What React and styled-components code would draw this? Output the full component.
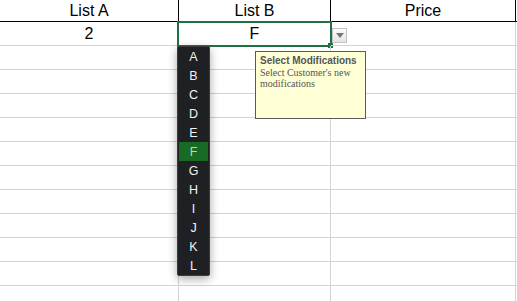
import styled, { createGlobalStyle } from 'styled-components';

const GlobalStyle = createGlobalStyle`
  html, body {
    margin: 0;
    padding: 0;
    background: #ffffff;
    overflow: hidden;
  }
`;

const Sheet = styled.div`
  display: grid;
  grid-template-columns: 179px 152px 185px 1fr;
  font-family: "Liberation Sans", Arial, sans-serif;
  color: #000;
`;

const HeaderCell = styled.div`
  box-sizing: border-box;
  height: 22px;
  border-bottom: 1px solid #000;
  border-right: ${({ last }) => (last ? 'none' : '1px solid #000')};
  display: flex;
  align-items: center;
  justify-content: center;
  font-size: 16px;
`;

const Cell = styled.div`
  box-sizing: border-box;
  position: relative;
  height: 24px;
  border-bottom: 1px solid #d4d4d4;
  border-right: ${({ last }) => (last ? 'none' : '1px solid #d4d4d4')};
  display: flex;
  align-items: center;
  justify-content: center;
  font-size: 16px;
`;

const Selection = styled.div`
  position: absolute;
  left: -2px;
  top: -1px;
  width: 155px;
  height: 26px;
  box-sizing: border-box;
  border: 2px solid #1f7244;
  pointer-events: none;
`;

const FillHandle = styled.div`
  position: absolute;
  right: -3px;
  bottom: -3px;
  width: 5px;
  height: 5px;
  background: #1f7244;
`;

const DropButton = styled.div`
  position: absolute;
  left: 153px;
  top: 6px;
  width: 15px;
  height: 15px;
  box-sizing: border-box;
  border: 1px solid #c4c4c4;
  background: linear-gradient(#fbfbfb, #e4e4e4);
  display: flex;
  align-items: center;
  justify-content: center;

  &::after {
    content: '';
    border-left: 4px solid transparent;
    border-right: 4px solid transparent;
    border-top: 5px solid #767676;
  }
`;

const ListBox = styled.ul`
  position: absolute;
  left: -2px;
  top: 24px;
  width: 33px;
  box-sizing: border-box;
  margin: 0;
  padding: 0 1px;
  list-style: none;
  background: #1f2023;
  border: 1px solid #3c3c3e;
  border-radius: 2px;
  box-shadow: 0 3px 10px rgba(0, 0, 0, 0.35);
  z-index: 2;
`;

const ListItem = styled.li`
  height: 19px;
  display: flex;
  align-items: center;
  justify-content: center;
  font-family: "Liberation Sans", Arial, sans-serif;
  font-size: 12.5px;
  color: ${({ active }) => (active ? '#b9d6bc' : '#f2f2f2')};
  background: ${({ active }) => (active ? '#176b25' : 'transparent')};
`;

const Tooltip = styled.div`
  position: absolute;
  left: 76px;
  top: 29px;
  width: 111px;
  height: 68px;
  box-sizing: border-box;
  padding: 3px 4px;
  background: #ffffd6;
  border: 1px solid #5a5a5a;
  color: #555;
  z-index: 1;
  text-align: left;
`;

const TipTitle = styled.div`
  font-family: "Liberation Sans", Arial, sans-serif;
  font-weight: bold;
  font-size: 10px;
  line-height: 12px;
`;

const TipBody = styled.div`
  font-family: "Liberation Serif", "Times New Roman", serif;
  font-size: 10px;
  line-height: 11px;
`;

const letters = ['A', 'B', 'C', 'D', 'E', 'F', 'G', 'H', 'I', 'J', 'K', 'L'];

export default function App() {
  const emptyRows = Array.from({ length: 11 });

  return (
    <>
      <GlobalStyle />
      <Sheet>
        <HeaderCell>List A</HeaderCell>
        <HeaderCell>List B</HeaderCell>
        <HeaderCell>Price</HeaderCell>
        <HeaderCell last />

        <Cell>2</Cell>
        <Cell>
          F
          <Selection>
            <FillHandle />
          </Selection>
          <DropButton />
          <ListBox>
            {letters.map((l) => (
              <ListItem key={l} active={l === 'F'}>
                {l}
              </ListItem>
            ))}
          </ListBox>
          <Tooltip>
            <TipTitle>Select Modifications</TipTitle>
            <TipBody>Select Customer's new modifications</TipBody>
          </Tooltip>
        </Cell>
        <Cell />
        <Cell last />

        {emptyRows.map((_, i) => (
          <Row key={i} />
        ))}
      </Sheet>
    </>
  );
}

function Row() {
  return (
    <>
      <Cell />
      <Cell />
      <Cell />
      <Cell last />
    </>
  );
}
